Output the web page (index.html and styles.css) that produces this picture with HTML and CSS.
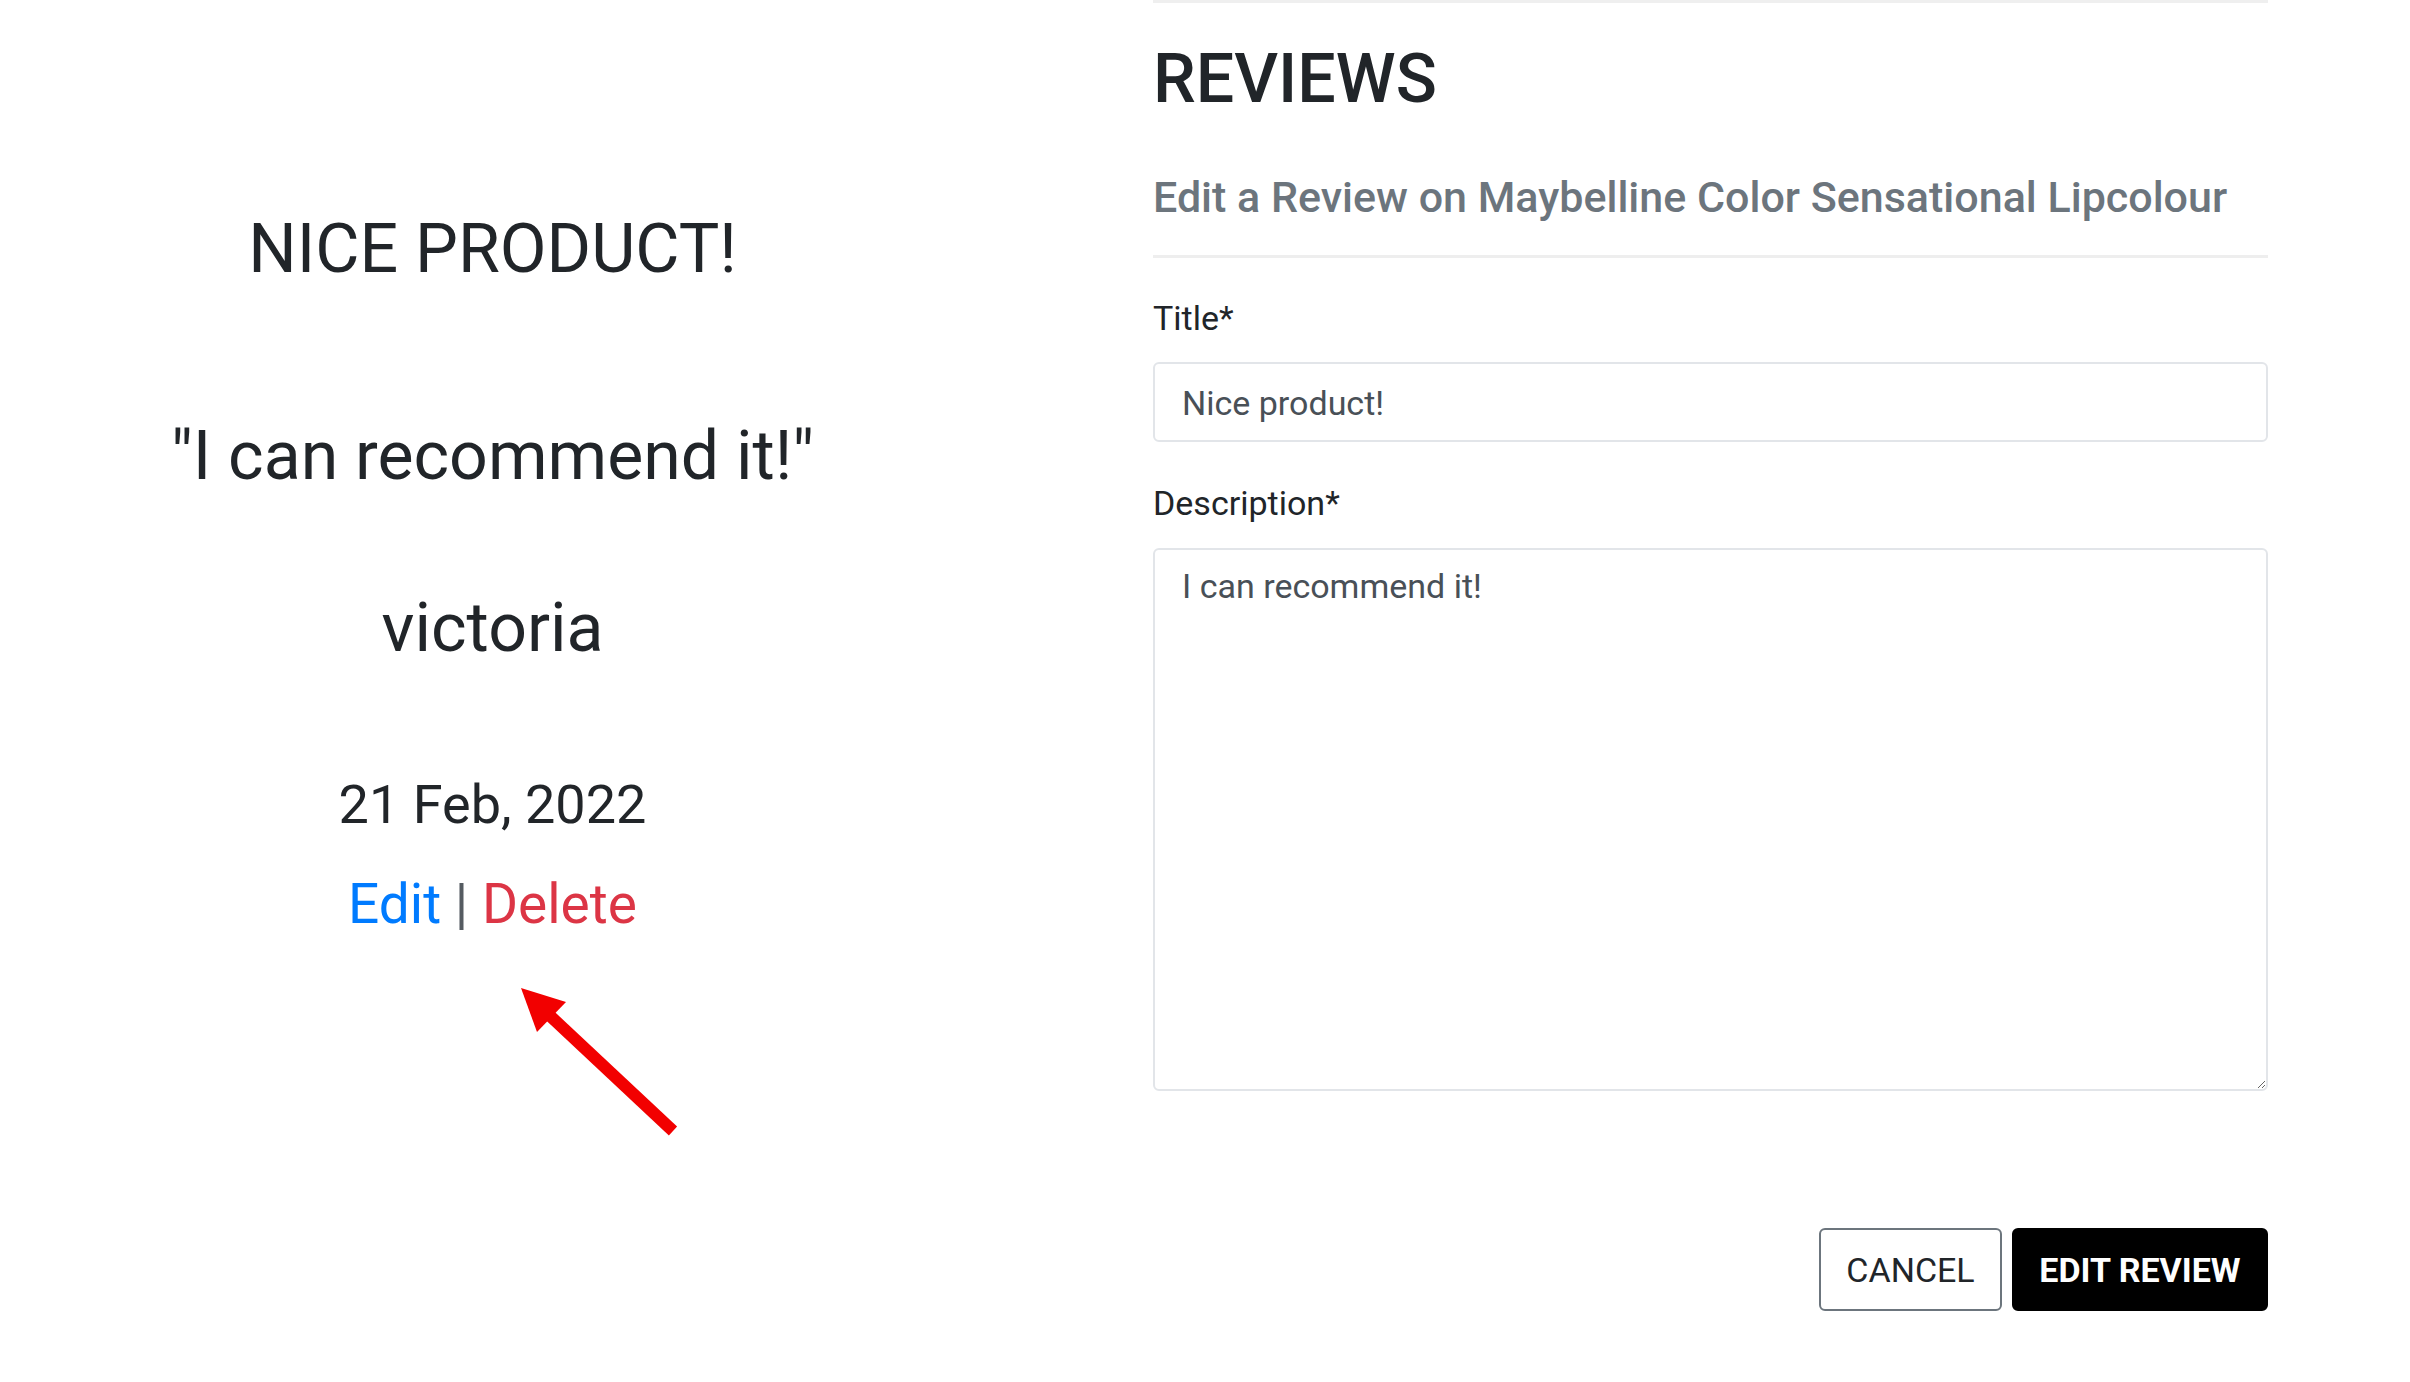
FILE: index.html
```html
<!DOCTYPE html>
<html lang="en">
<head>
<meta charset="utf-8">
<title>Edit Review</title>
<link rel="stylesheet" href="styles.css">
</head>
<body>
<div class="page">
  <section class="review-card">
    <h2 class="review-title">NICE PRODUCT!</h2>
    <p class="review-text">"I can recommend it!"</p>
    <p class="review-author">victoria</p>
    <p class="review-date">21 Feb, 2022</p>
    <p class="review-actions"><a class="link-edit" href="#">Edit</a> <span class="sep">|</span> <a class="link-delete" href="#">Delete</a></p>
  </section>

  <section class="review-form">
    <div class="rule-top"></div>
    <h1 class="form-heading">REVIEWS</h1>
    <h5 class="form-subheading">Edit a Review on Maybelline Color Sensational Lipcolour</h5>
    <div class="rule"></div>
    <form class="form">
      <label class="field-label" for="title">Title*</label>
      <input class="field-input" id="title" type="text" value="Nice product!">
      <label class="field-label field-label-desc" for="desc">Description*</label>
      <textarea class="field-textarea" id="desc">I can recommend it!</textarea>
      <div class="form-actions">
        <a class="btn btn-cancel" href="#">CANCEL</a>
        <button class="btn btn-submit" type="submit">EDIT REVIEW</button>
      </div>
    </form>
  </section>

  <svg class="annotation" width="2410" height="1382" viewBox="0 0 2410 1382" aria-hidden="true">
    <line x1="546" y1="1012" x2="673" y2="1131" stroke="#f20000" stroke-width="12"/>
    <polygon points="521,988 566,1002 537,1032" fill="#f20000"/>
  </svg>
</div>
</body>
</html>
```

FILE: styles.css
```css
* {
  box-sizing: border-box;
}

html, body {
  margin: 0;
  padding: 0;
  background: #ffffff;
}

body {
  font-family: Roboto, "Noto Sans", "Liberation Sans", sans-serif;
  color: #212529;
  width: 2410px;
  height: 1382px;
  overflow: hidden;
}

.page {
  position: relative;
  display: flex;
  align-items: flex-start;
  width: 2410px;
  height: 1382px;
}

/* Left: review card */
.review-card {
  width: 985px;
  text-align: center;
  color: #212529;
}

.review-card p,
.review-card h2 {
  margin: 0;
  font-weight: 400;
}

.review-card .review-title {
  margin-top: 208px;
  font-size: 68px;
  line-height: 82px;
}

.review-card .review-text {
  margin-top: 125px;
  font-size: 68px;
  line-height: 82px;
}

.review-card .review-author {
  margin-top: 90px;
  font-size: 68px;
  line-height: 82px;
}

.review-card .review-date {
  margin-top: 103px;
  font-size: 54px;
  line-height: 65px;
}

.review-card .review-actions {
  margin-top: 34px;
  font-size: 55px;
  line-height: 66px;
}

.link-edit {
  color: #007bff;
  text-decoration: none;
}

.link-delete {
  color: #dc3545;
  text-decoration: none;
}

.sep {
  color: #555b61;
}

/* Right: form */
.review-form {
  width: 1115px;
  margin-left: 168px;
}

.rule-top {
  height: 3px;
  background: #efefef;
}

.form-heading {
  margin: 36px 0 0;
  font-size: 68px;
  line-height: 80px;
  font-weight: 500;
  color: #212529;
}

.form-subheading {
  margin: 52px 0 0;
  font-size: 43px;
  line-height: 52px;
  font-weight: 500;
  color: #6c757d;
}

.rule {
  margin-top: 32px;
  height: 3px;
  background: #eeeeee;
}

.form {
  margin: 0;
}

.field-label {
  display: block;
  margin-top: 40px;
  font-size: 34px;
  line-height: 40px;
  color: #212529;
}

.field-label-desc {
  margin-top: 41px;
}

.field-input {
  display: block;
  width: 100%;
  height: 80px;
  margin-top: 24px;
  padding: 19px 27px 17px;
  border: 2px solid #e2e5e9;
  border-radius: 6px;
  font-family: Roboto, "Noto Sans", sans-serif;
  font-size: 34px;
  line-height: 40px;
  color: #495057;
  background: #fff;
  outline: none;
}

.field-textarea {
  display: block;
  width: 100%;
  height: 543px;
  margin-top: 25px;
  padding: 16px 27px;
  border: 2px solid #e2e5e9;
  border-radius: 6px;
  font-family: Roboto, "Noto Sans", sans-serif;
  font-size: 34px;
  line-height: 40px;
  color: #495057;
  background: #fff;
  resize: vertical;
  outline: none;
}

.form-actions {
  display: flex;
  justify-content: flex-end;
  gap: 10px;
  margin-top: 137px;
}

.btn {
  display: inline-flex;
  align-items: center;
  justify-content: center;
  height: 83px;
  padding: 0 24px;
  border-radius: 6px;
  font-family: Roboto, "Noto Sans", sans-serif;
  font-size: 34px;
  line-height: 40px;
  text-decoration: none;
  cursor: pointer;
}

.btn-cancel {
  width: 183px;
  border: 2px solid #6c757d;
  background: #fff;
  color: #212529;
  font-weight: 400;
}

.btn-submit {
  width: 256px;
  border: 2px solid #000;
  background: #000;
  color: #fff;
  font-weight: 700;
}

/* Annotation overlay */
.annotation {
  position: absolute;
  left: 0;
  top: 0;
  pointer-events: none;
}
```
